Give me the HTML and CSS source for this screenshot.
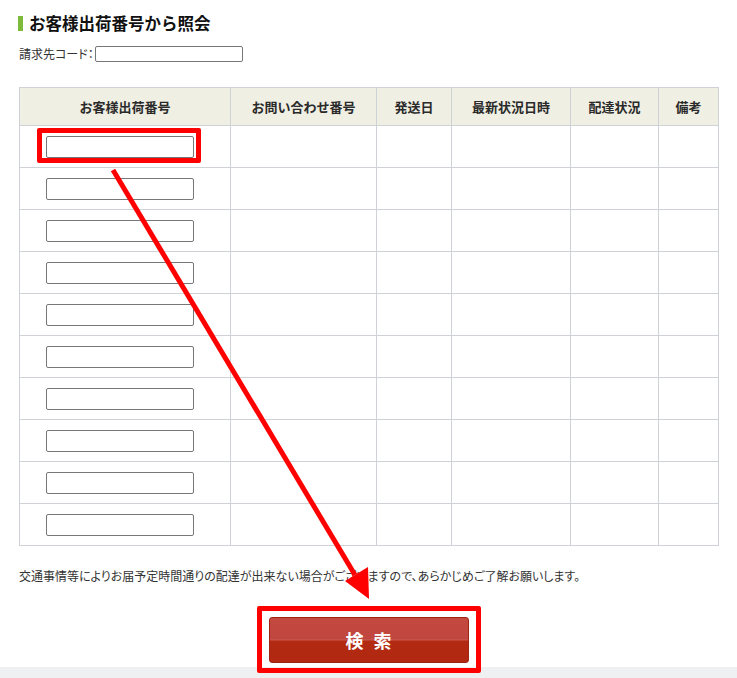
FILE: index.html
```html
<!DOCTYPE html>
<html lang="ja">
<head>
<meta charset="utf-8">
<title>お客様出荷番号から照会</title>
<link rel="stylesheet" href="styles.css">
</head>
<body>
<div class="page">
  <h2 class="title">お客様出荷番号から照会</h2>
  <div class="code-row">
    <label class="code-label">請求先コード：</label>
    <input class="code-input" type="text">
  </div>
  <table class="result">
    <colgroup>
      <col class="w1"><col class="w2"><col class="w3"><col class="w4"><col class="w5"><col class="w6">
    </colgroup>
    <thead>
      <tr><th>お客様出荷番号</th><th>お問い合わせ番号</th><th>発送日</th><th>最新状況日時</th><th>配達状況</th><th>備考</th></tr>
    </thead>
    <tbody>
      <tr><td class="in"><input type="text"></td><td></td><td></td><td></td><td></td><td></td></tr>
      <tr><td class="in"><input type="text"></td><td></td><td></td><td></td><td></td><td></td></tr>
      <tr><td class="in"><input type="text"></td><td></td><td></td><td></td><td></td><td></td></tr>
      <tr><td class="in"><input type="text"></td><td></td><td></td><td></td><td></td><td></td></tr>
      <tr><td class="in"><input type="text"></td><td></td><td></td><td></td><td></td><td></td></tr>
      <tr><td class="in"><input type="text"></td><td></td><td></td><td></td><td></td><td></td></tr>
      <tr><td class="in"><input type="text"></td><td></td><td></td><td></td><td></td><td></td></tr>
      <tr><td class="in"><input type="text"></td><td></td><td></td><td></td><td></td><td></td></tr>
      <tr><td class="in"><input type="text"></td><td></td><td></td><td></td><td></td><td></td></tr>
      <tr><td class="in"><input type="text"></td><td></td><td></td><td></td><td></td><td></td></tr>
    </tbody>
  </table>
  <p class="note">交通事情等によりお届予定時間通りの配達が出来ない場合がございますので、あらかじめご了解お願いします。</p>
  <div class="actions">
    <button class="search" type="button">検 索</button>
  </div>
</div>
<div class="footer-band"></div>

<div class="mark mark-input"></div>
<div class="mark mark-button"></div>
<svg class="arrow" width="737" height="678" viewBox="0 0 737 678">
  <line x1="113" y1="170" x2="355" y2="575" stroke="#ff0000" stroke-width="5"/>
  <polygon points="369,599 345,581 368,567" fill="#ff0000"/>
</svg>
</body>
</html>
```

FILE: styles.css
```css
html, body {
  margin: 0;
  padding: 0;
  background: #ffffff;
}
body {
  position: relative;
  width: 737px;
  height: 678px;
  overflow: hidden;
  font-family: "Noto Sans CJK JP", "Noto Sans", sans-serif;
  color: #333333;
  font-size: 12px;
}
.page {
  padding: 0 18px 0 19px;
}
.title {
  margin: 0;
  padding-top: 13px;
  display: flex;
  align-items: center;
  font-size: 16.5px;
  line-height: 20px;
  font-weight: bold;
  color: #111111;
}
.title::before {
  content: "";
  display: block;
  width: 5px;
  height: 15px;
  background: #7dba3a;
  margin: 1px 6px 0 -1px;
}
.code-row {
  display: flex;
  align-items: center;
  margin-top: 13px;
  height: 16px;
}
.code-label {
  font-size: 12px;
  line-height: 16px;
  font-feature-settings: "palt";
  color: #333333;
  margin-right: 1px;
}
.code-input {
  box-sizing: border-box;
  width: 148px;
  height: 16px;
  border: 1px solid #777777;
  border-radius: 2px;
  padding: 0;
  margin: 0;
}
.result {
  margin-top: 25px;
  border-collapse: collapse;
  table-layout: fixed;
  width: 699px;
}
.w1 { width: 211px; }
.w2 { width: 146px; }
.w3 { width: 75px; }
.w4 { width: 119px; }
.w5 { width: 88px; }
.w6 { width: 60px; }
.result th,
.result td {
  border: 1px solid #cfd3d7;
  padding: 0;
}
.result th {
  height: 37px;
  background: #f0efe3;
  font-size: 13px;
  font-weight: bold;
  color: #2a2a2a;
  text-align: center;
  vertical-align: middle;
}
.result td {
  height: 41px;
}
.result td.in {
  padding-left: 26px;
  vertical-align: middle;
}
.result td.in input {
  display: block;
  box-sizing: border-box;
  width: 148px;
  height: 22px;
  margin: 0;
  padding: 0;
  border: 1px solid #777777;
  border-radius: 2px;
  background: #ffffff;
}
.note {
  margin: 23px 0 0 0;
  font-size: 12px;
  line-height: 14px;
  font-feature-settings: "palt";
  color: #333333;
}
.actions {
  display: flex;
  justify-content: center;
  margin-top: 34px;
}
.search {
  box-sizing: border-box;
  width: 200px;
  height: 46px;
  margin-left: -1px;
  border: 1px solid #9e2414;
  border-radius: 3px;
  background: linear-gradient(to bottom, #c4493f 0%, #c04640 48%, #cf6158 50%, #b22a12 52%, #b22812 100%);
  color: #ffffff;
  font-family: "Noto Sans CJK JP", sans-serif;
  font-size: 18px;
  font-weight: bold;
  letter-spacing: 3px;
  padding: 0 0 0 3px;
}
.footer-band {
  position: absolute;
  left: 0;
  right: 0;
  top: 667px;
  height: 11px;
  background: #eff0f2;
}
.mark {
  position: absolute;
  box-sizing: border-box;
  border: 5px solid #ff0000;
  border-radius: 2px;
}
.mark-input {
  left: 37px;
  top: 128px;
  width: 164px;
  height: 35px;
}
.mark-button {
  left: 257px;
  top: 606px;
  width: 224px;
  height: 67px;
}
.arrow {
  position: absolute;
  left: 0;
  top: 0;
  pointer-events: none;
}
```
